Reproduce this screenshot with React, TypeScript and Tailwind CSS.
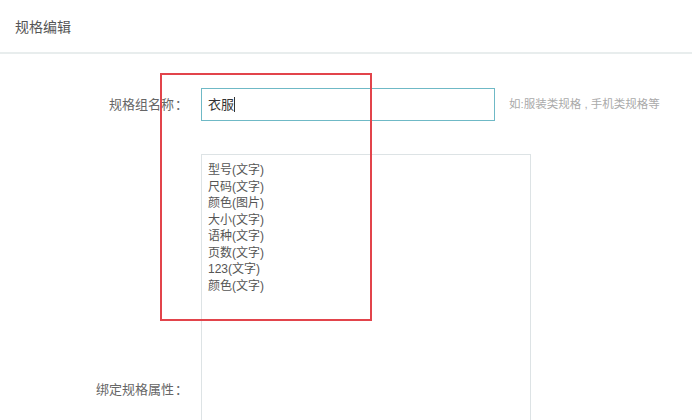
import React from "react";

const items = [
  "型号(文字)",
  "尺码(文字)",
  "颜色(图片)",
  "大小(文字)",
  "语种(文字)",
  "页数(文字)",
  "123(文字)",
  "颜色(文字)",
];

export default function App() {
  return (
    <div
      className="relative w-[692px] h-[420px] overflow-hidden bg-white"
      style={{ fontFamily: '"Liberation Sans", "Noto Sans CJK SC", sans-serif' }}
    >
      <div className="h-[54px] border-b-2 border-[#e8eded] flex items-center pl-[15px] pt-[2px]">
        <span className="text-[14px] text-[#555]">规格编辑</span>
      </div>
      <div className="pt-[34px] flex flex-col gap-[33px]">
        <div className="flex items-center">
          <div className="w-[188px] text-right text-[13px] text-[#666]">
            规格组名称<span className="ml-[1px]">：</span>
          </div>
          <div className="ml-[13px] w-[294px] h-[33px] border border-[#6fb9c6] flex items-center px-[6px] text-[13px] text-[#333]">
            衣服<span className="inline-block w-px h-[15px] bg-[#333]" />
          </div>
          <div className="ml-[14px] text-[11.5px] text-[#aaa] whitespace-pre">如:服装类规格 , 手机类规格等</div>
        </div>
        <div className="flex items-center">
          <div className="w-[188px] text-right text-[13px] text-[#666]">
            绑定规格属性<span className="ml-[1px]">：</span>
          </div>
          <div className="ml-[13px] w-[330px] h-[472px] border border-[#dde3e5] px-[6px] pt-[7px] self-start">
            {items.map((t) => (
              <div key={t} className="text-[12px] leading-[16.5px] text-[#555]">
                {t}
              </div>
            ))}
          </div>
        </div>
      </div>
      <div className="absolute left-[160px] top-[73px] w-[212px] h-[248px] border-2 border-[#e2444b]" />
    </div>
  );
}
